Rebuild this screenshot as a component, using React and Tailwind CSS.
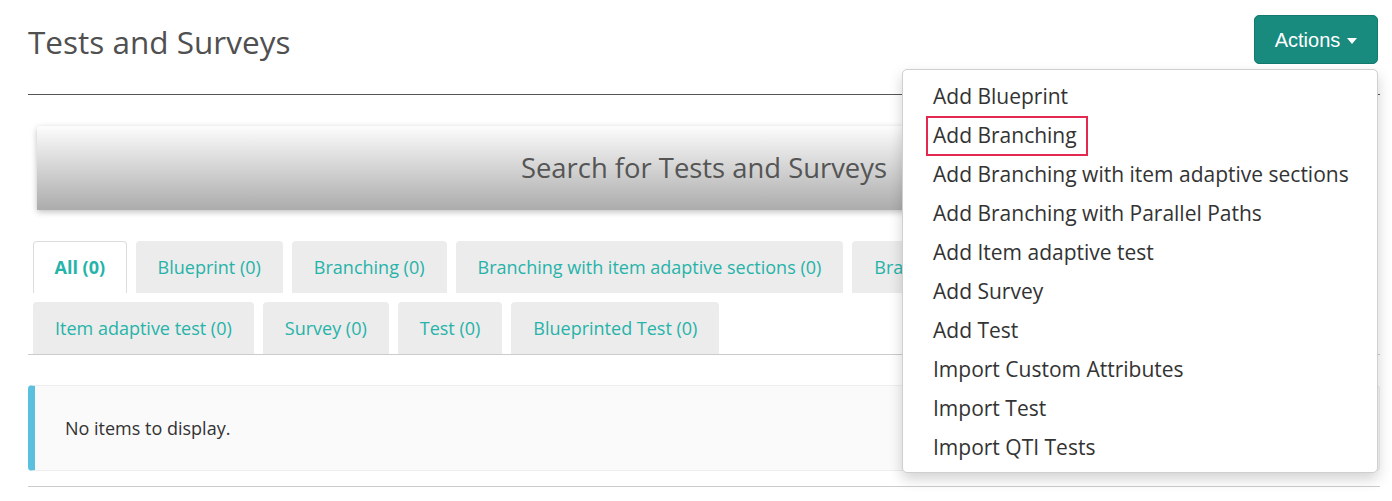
import React from "react";

const tabsRow = [
  "Blueprint (0)",
  "Branching (0)",
  "Branching with item adaptive sections (0)",
  "Branching with Parallel Paths (0)",
  "Item adaptive test (0)",
  "Survey (0)",
  "Test (0)",
  "Blueprinted Test (0)",
];

const menu = [
  "Add Blueprint",
  "Add Branching",
  "Add Branching with item adaptive sections",
  "Add Branching with Parallel Paths",
  "Add Item adaptive test",
  "Add Survey",
  "Add Test",
  "Import Custom Attributes",
  "Import Test",
  "Import QTI Tests",
];

export default function App() {
  return (
    <div
      className="w-full min-h-[501px] bg-white pl-[28px] pr-[12px]"
      style={{ fontFamily: '"Open Sans", "Noto Sans", sans-serif' }}
    >
      {/* Header */}
      <div className="flex items-start justify-between pt-[15px]">
        <h1 className="text-[31.5px] leading-[45px] pt-[4px] text-[#505050] font-normal">
          Tests and Surveys
        </h1>
        <div className="relative mr-[2px]">
          <button
            className="h-[49px] w-[124px] rounded-[5px] bg-[#188a7e] text-white text-[20px] flex items-center justify-center gap-[7px] border border-[#137a70]"
            style={{ fontFamily: '"Liberation Sans", Arial, sans-serif' }}
          >
            <span>Actions</span>
            <span className="inline-block w-0 h-0 border-t-[6px] border-t-white border-x-[5.5px] border-x-transparent mt-[2px]" />
          </button>
          <div className="absolute right-0 top-[54px] z-10 w-[476px] rounded-[5px] border border-[#cfcfcf] bg-white pt-[7px] pb-[5px] shadow-[0_6px_14px_rgba(0,0,0,0.18)]">
            {menu.map((m) => (
              <div key={m} className="h-[39px] pl-[30px] text-[21px] leading-[39px] text-[#333]">
                {m === "Add Branching" ? (
                  <span className="relative inline-block">
                    {m}
                    <span className="absolute -left-[7px] -right-[11px] -top-[0.5px] -bottom-[0.5px] border-2 border-[#e3294f]" />
                  </span>
                ) : (
                  m
                )}
              </div>
            ))}
          </div>
        </div>
      </div>
      <div className="mt-[30px] border-t border-[#555]" />

      {/* Search bar */}
      <div className="mx-[9px] mt-[31px] h-[84px] rounded-t-[4px] bg-gradient-to-b from-[#fdfdfd] to-[#acacac] shadow-[0_2px_6px_rgba(0,0,0,0.25)] flex items-center justify-center">
        <span className="text-[27.4px] text-[#555]">Search for Tests and Surveys</span>
      </div>

      {/* Tabs */}
      <div className="mt-[31px] flex flex-wrap gap-x-[9px] gap-y-[9px] pl-[5px] border-b border-[#ccc]">
        <div className="h-[52px] px-[20.5px] flex items-center rounded-t-[4px] border border-b-0 border-[#ddd] bg-white text-[18px] font-bold text-[#26b3a9]">
          All (0)
        </div>
        {tabsRow.map((t) => (
          <div
            key={t}
            className="h-[52px] px-[22px] flex items-center rounded-t-[4px] bg-[#ececec] text-[18px] text-[#26b3a9]"
          >
            {t}
          </div>
        ))}
      </div>

      {/* Alert */}
      <div className="mt-[30px] h-[86px] flex items-center rounded-[4px] border border-[#eee] border-l-[7px] border-l-[#5bc0de] bg-[#fafafa] pl-[30px]">
        <span className="text-[18px] text-[#333]">No items to display.</span>
      </div>

      <div className="mt-[15px] border-t border-[#ccc]" />
    </div>
  );
}
